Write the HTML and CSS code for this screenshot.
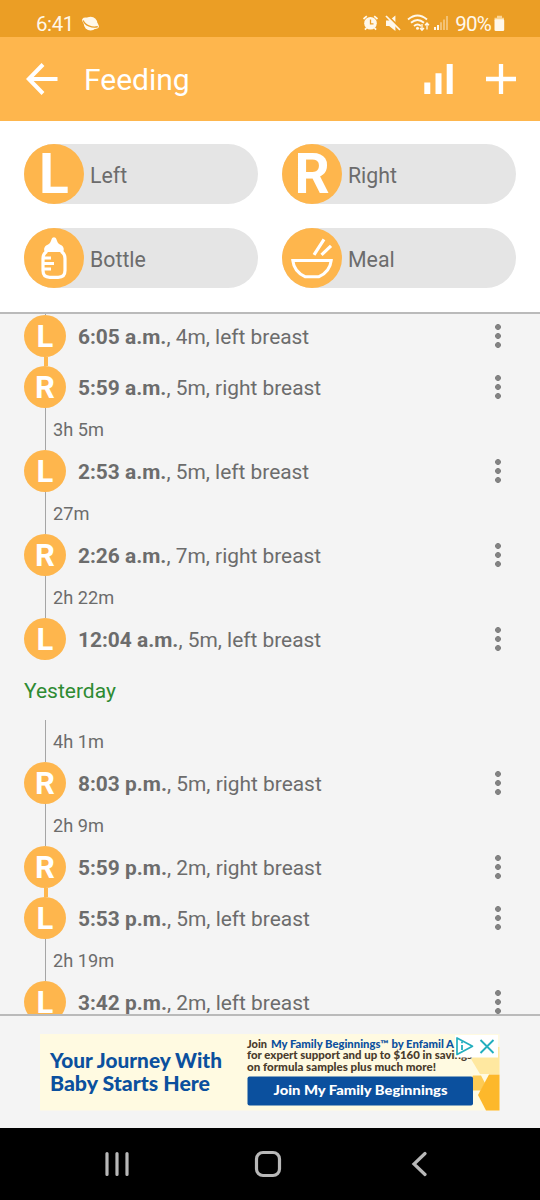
FILE: index.html
```html
<!DOCTYPE html>
<html lang="en">
<head>
<meta charset="utf-8">
<title>Feeding</title>
<link rel="stylesheet" href="styles.css">
</head>
<body>
<div class="screen">
  <div class="status">
    <span class="clock">6:41</span>
    <svg class="planet" width="20" height="18" viewBox="0 0 20 18"><circle cx="9.6" cy="8.600" r="6.900" fill="#fff8ea"/><ellipse cx="9.500" cy="8.300" rx="9.200" ry="4.400" transform="rotate(28 9.500 8.300)" fill="#fff8ea"/><path d="M2.300 5.500C3.500 10 11 13.300 16.800 11.600" fill="none" stroke="#eb9e25" stroke-width="1.200"/></svg>
    <span class="grow"></span>
    <svg class="sys" width="90" height="20" viewBox="0 0 90 20" fill="none" stroke="#fff8ea">
      <circle cx="8.500" cy="9.300" r="6.300" fill="#fff8ea" stroke="none"/><path d="M1.500 5l3.300-2.900M15.500 5l-3.300-2.900M4.500 14l-1.600 1.700M12.500 14l1.600 1.700" stroke-width="1.700"/><path d="M8.500 5.500v4.300h3" stroke="#eb9e25" stroke-width="1.300"/>
      <path d="M24 6.500h3.200l6.200-5v15.500l-6.200-5h-3.200z" fill="#fff8ea" stroke="none"/><path d="M25 1l14 14" stroke="#eb9e25" stroke-width="2"/><path d="M24 2l14 14" stroke-width="1.700"/>
      <path d="M46 5.500Q55.500-2.500 65 5.500M49 8.800Q55.500 3.200 62 8.800M52 11.900Q55.500 9 59 11.900" stroke-width="1.900"/><circle cx="55.500" cy="14.300" r="1.500" fill="#fff8ea" stroke="none"/>
      <path d="M60 10v6M58 14l2 2.300 2-2.300M65 15.500V9M63 11.300l2-2.300 2 2.300" stroke-width="1.300"/>
      <path d="M73 16v-3M76 16V11" stroke-width="2"/><path d="M79 16V8.300M82 16V5.500M85 16V2" stroke-width="2" opacity=".4"/>
    </svg>
    <span class="percent">90%</span>
    <svg class="battery" width="11" height="18" viewBox="0 0 11 18"><path d="M3 .8h5v2h2v2.700H.5V2.800H3z" fill="#fbd596"/><rect x=".5" y="4.300" width="9.700" height="11.700" rx="1.300" fill="#fff8ea"/></svg>
  </div>
  <header class="bar">
    <svg width="32" height="32" viewBox="0 0 32 32" fill="none" stroke="#fff" stroke-width="4"><path d="M31.500 16H3M17 1.500L2.800 16 17 30.500"/></svg>
    <h1>Feeding</h1>
    <svg class="chart" width="29" height="30" viewBox="0 0 29 30" fill="#fff"><path d="M.3 18.600h6V30h-6zM11.500 9.300h6V30h-6zM22.700 0h6v30h-6z"/></svg>
    <svg width="30" height="30" viewBox="0 0 30 30" stroke="#fff" stroke-width="4.300"><path d="M15 0v30M0 15h30"/></svg>
  </header>
  <section class="actions">
    <div class="pill"><span class="disc">L</span><span class="label">Left</span></div>
    <div class="pill"><span class="disc">R</span><span class="label">Right</span></div>
    <div class="pill"><span class="disc"><svg width="60" height="60" viewBox="0 0 60 60" fill="none" stroke="#fff"><path d="M20.800 24c-1.800-4 .5-6.500 3.300-7.500 2.200-1 2.800-3.300 3.400-5 .8-3 4.200-3 5 0 .6 1.700 1.200 4 3.400 5 2.800 1 5 3.500 3.300 7.500z" fill="#fff" stroke="none"/><path d="M23 23.300q-4 2.200-4 7.200v12q0 6.800 6.800 6.800h8.400q6.800 0 6.800-6.800v-12q0-5-4-7.200" stroke-width="3.200"/><path d="M19 30h8M19 35.500h11M19 41h8" stroke-width="2.800"/></svg></span><span class="label">Bottle</span></div>
    <div class="pill"><span class="disc"><svg width="60" height="60" viewBox="0 0 60 60" fill="none" stroke="#fff" stroke-width="3"><path d="M10.800 32.500H49.200Q48 43.500 37 48.700H23Q12 43.500 10.800 32.500Z"/><path d="M32 26.800L42 11.400M39.500 26.800L49 17.800" stroke-width="3.200"/></svg></span><span class="label">Meal</span></div>
  </section>
  <main class="list">
    <div class="lead"></div>
    <div class="row"><i>L</i><p><b>6:05 a.m.</b>, 4m, left breast</p><span class="dots"></span></div>
    <div class="join"></div>
    <div class="row"><i>R</i><p><b>5:59 a.m.</b>, 5m, right breast</p><span class="dots"></span></div>
    <div class="gap">3h 5m</div>
    <div class="row"><i>L</i><p><b>2:53 a.m.</b>, 5m, left breast</p><span class="dots"></span></div>
    <div class="gap">27m</div>
    <div class="row"><i>R</i><p><b>2:26 a.m.</b>, 7m, right breast</p><span class="dots"></span></div>
    <div class="gap">2h 22m</div>
    <div class="row"><i>L</i><p><b>12:04 a.m.</b>, 5m, left breast</p><span class="dots"></span></div>
    <h2>Yesterday</h2>
    <div class="gap">4h 1m</div>
    <div class="row"><i>R</i><p><b>8:03 p.m.</b>, 5m, right breast</p><span class="dots"></span></div>
    <div class="gap">2h 9m</div>
    <div class="row"><i>R</i><p><b>5:59 p.m.</b>, 2m, right breast</p><span class="dots"></span></div>
    <div class="join"></div>
    <div class="row"><i>L</i><p><b>5:53 p.m.</b>, 5m, left breast</p><span class="dots"></span></div>
    <div class="gap">2h 19m</div>
    <div class="row"><i>L</i><p><b>3:42 p.m.</b>, 2m, left breast</p><span class="dots"></span></div>
  </main>
  <aside class="ad">
    <svg width="460" height="77" viewBox="0 0 460 77">
      <rect width="459.500" height="76.500" fill="#fffae1"/>
      <path d="M431 25l9-12h19.500v27H440z" fill="#ffe8a0"/>
      <path d="M429 49l4-7.500h8l4 7.500-4 7.500h-8z" fill="#fdcb55"/>
      <path d="M438 61l11-20.500h10.500v36H446z" fill="#fdb82b"/>
      <g class="slogan"><text x="10" y="33.500" textLength="172" lengthAdjust="spacingAndGlyphs">Your Journey With</text><text x="10" y="56.500" textLength="160" lengthAdjust="spacingAndGlyphs">Baby Starts Here</text></g>
      <g class="copy"><text x="207" y="13.500" textLength="20" lengthAdjust="spacingAndGlyphs">Join</text><text class="brand" x="231" y="13.500" textLength="183" lengthAdjust="spacingAndGlyphs">My Family Beginnings™ by Enfamil A</text><text x="207" y="24.500" textLength="225" lengthAdjust="spacingAndGlyphs">for expert support and up to $160 in savings</text><text x="207" y="36.500" textLength="189" lengthAdjust="spacingAndGlyphs">on formula samples plus much more!</text></g>
      <rect x="207.500" y="42.500" width="225.500" height="29" rx="2" fill="#0b509e"/>
      <text class="cta" x="233.500" y="61" textLength="174" lengthAdjust="spacingAndGlyphs">Join My Family Beginnings</text>
      <rect x="415" y="1" width="43" height="22.500" fill="#fff"/>
      <g fill="none" stroke="#22aebe"><path d="M417 4v16.500l15.500-8.300z" stroke-width="1.700" stroke-linejoin="round"/><path d="M422 11v5M422 7.500v1.800" stroke-width="1.800"/><path d="M440.500 6l13 13M453.500 6l-13 13" stroke-width="1.900"/></g>
    </svg>
  </aside>
  <nav class="nav">
    <svg width="540" height="72" viewBox="0 0 540 72" fill="none" stroke="#b8b8b8" stroke-width="3.200" stroke-linecap="round"><path d="M107 25.500v21M117 25.500v21M127 25.500v21M425 25.500l-11 10.500 11 10.500"/><rect x="256.500" y="24.500" width="23" height="23" rx="6.500"/></svg>
  </nav>
</div>
</body>
</html>
```

FILE: styles.css
```css
* { box-sizing: border-box; }
body { margin: 0; font-family: Roboto, sans-serif; color: #6c6c6c; }
svg { display: block; flex: none; }
.screen { width: 540px; height: 1200px; overflow: hidden; display: flex; flex-direction: column; background: #f4f4f4; }

.status { height: 36.5px; flex: none; display: flex; align-items: center; padding: 11px 35px 0 36px; background: #eb9e25; color: #fff8ea; font-size: 20.5px; line-height: 26px; }
.clock { width: 44.5px; letter-spacing: -0.4px; }
.grow { flex: 1; }
.sys { margin-right: 3px; }
.percent { letter-spacing: -0.8px; margin-right: 3px; }

.bar { height: 84px; flex: none; display: flex; align-items: center; padding: 0 24px 0 26px; background: #feb64d; color: #fff; }
h1 { flex: 1; margin: 3px 0 0 26px; font-size: 30px; font-weight: 400; line-height: 36px; }
.chart { margin-right: 33px; }

.actions { height: 193.5px; flex: none; display: grid; grid-template-columns: 234px 234px; grid-auto-rows: 60px; gap: 24px; padding: 23.5px 24px 0; background: #fff; border-bottom: 2px solid #bababa; }
.pill { display: flex; align-items: center; gap: 6px; height: 60px; border-radius: 30px; background: #e5e5e5; font-size: 21.3px; }
.label { margin-top: 2px; }
.disc { width: 60px; height: 60px; border-radius: 50%; background: #feb64d; color: #fff; font-size: 55px; font-weight: 700; line-height: 61px; text-align: center; }

.list { height: 700px; flex: none; overflow: hidden; }
.lead { height: 1px; margin-left: 45px; border-left: 1px solid #a5a5a5; }
.row { height: 42px; display: flex; align-items: center; padding: 0 39px 0 24px; }
.row i { width: 42px; height: 42px; border-radius: 50%; background: #feb64d; color: #fff; font-style: normal; font-weight: 700; font-size: 31px; line-height: 43.5px; text-align: center; }
.row p { flex: 1; margin: 2px 0 0 12px; font-size: 20.9px; line-height: 26px; white-space: nowrap; }
.dots { width: 6px; height: 24px; background: radial-gradient(circle at 3px 3px, #838383 2.6px, transparent 3.2px) 0 0 / 6px 9px; }
.join { width: 4px; height: 9px; margin-left: 44px; background: #feb64d; }
.gap { height: 42px; margin-left: 45px; padding-left: 7px; border-left: 1px solid #a5a5a5; font-size: 18.2px; line-height: 44px; }
h2 { height: 60px; margin: 0; padding-left: 24px; color: #2e8b32; font-size: 21px; font-weight: 400; line-height: 62px; }

.ad { height: 114px; flex: none; padding: 18px 40px 0; border-top: 2px solid #bababa; }
.ad text { font-family: Lato, sans-serif; font-weight: 900; }
.slogan { font-size: 20px; fill: #0b509e; }
.copy { font-size: 10.500px; fill: #493b2c; }
.copy .brand { fill: #0b509e; }
.ad .cta { font-size: 13px; fill: #fff; }
.nav { height: 72px; flex: none; background: #000; }
```
